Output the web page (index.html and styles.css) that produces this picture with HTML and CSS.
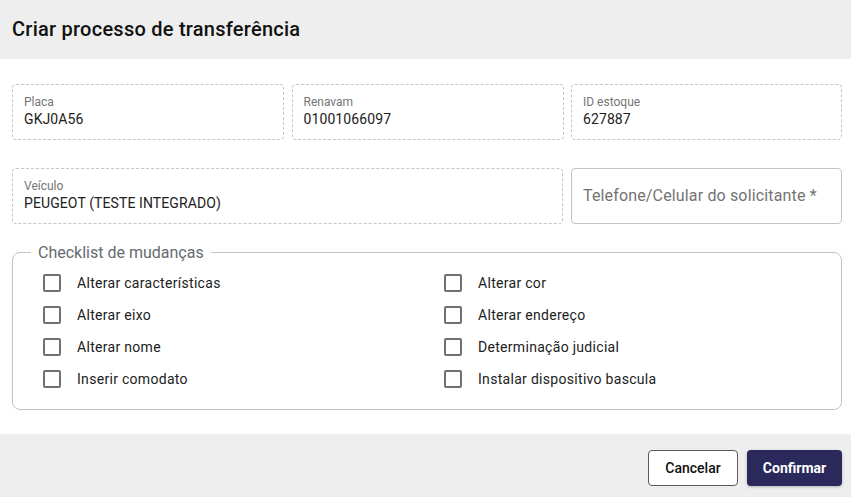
FILE: index.html
```html
<!DOCTYPE html>
<html lang="pt-BR">
<head>
<meta charset="utf-8">
<title>Criar processo de transferência</title>
<link rel="stylesheet" href="styles.css">
</head>
<body>
<div class="dialog">
  <header class="dialog-header">
    <h1 class="dialog-title">Criar processo de transferência</h1>
  </header>
  <main class="dialog-content">
    <div class="row row-3">
      <div class="field">
        <span class="field-label">Placa</span>
        <span class="field-value">GKJ0A56</span>
      </div>
      <div class="field">
        <span class="field-label">Renavam</span>
        <span class="field-value">01001066097</span>
      </div>
      <div class="field">
        <span class="field-label">ID estoque</span>
        <span class="field-value">627887</span>
      </div>
    </div>
    <div class="row row-2">
      <div class="field">
        <span class="field-label">Veículo</span>
        <span class="field-value">PEUGEOT (TESTE INTEGRADO)</span>
      </div>
      <div class="input-box">
        <span class="placeholder">Telefone/Celular do solicitante *</span>
      </div>
    </div>
    <fieldset class="checklist">
      <legend class="checklist-legend">Checklist de mudanças</legend>
      <div class="checklist-grid">
        <label class="check"><span class="box"></span>Alterar características</label>
        <label class="check"><span class="box"></span>Alterar cor</label>
        <label class="check"><span class="box"></span>Alterar eixo</label>
        <label class="check"><span class="box"></span>Alterar endereço</label>
        <label class="check"><span class="box"></span>Alterar nome</label>
        <label class="check"><span class="box"></span>Determinação judicial</label>
        <label class="check"><span class="box"></span>Inserir comodato</label>
        <label class="check"><span class="box"></span>Instalar dispositivo bascula</label>
      </div>
    </fieldset>
  </main>
  <footer class="dialog-footer">
    <button class="btn btn-outline">Cancelar</button>
    <button class="btn btn-primary">Confirmar</button>
  </footer>
</div>
</body>
</html>
```
FILE: styles.css
```css
* { box-sizing: border-box; }
html, body { margin: 0; padding: 0; background: #fff; }
body {
  font-family: Roboto, "Liberation Sans", Arial, sans-serif;
  color: #212121;
  width: 851px;
}
.dialog-header {
  height: 59px;
  background: #eeeeee;
  display: flex;
  align-items: center;
  padding: 0 12px;
}
.dialog-title {
  margin: 0;
  font-size: 20px;
  font-weight: 500;
  letter-spacing: 0.25px;
  color: #111;
  line-height: 24px;
  padding-bottom: 2px;
}
.dialog-content {
  padding: 25px 9px 24px 12px;
}
.row {
  display: grid;
  margin-bottom: 28px;
}
.row-3 { grid-template-columns: 272px 272px 1fr; gap: 7.5px; }
.row-2 { grid-template-columns: 551px 1fr; gap: 8px; margin-bottom: 19px; }
.field {
  height: 56px;
  border: 1px dashed #c6c6c6;
  border-radius: 4px;
  padding: 10px 11px;
  display: flex;
  flex-direction: column;
}
.field-label {
  font-size: 12px;
  line-height: 14px;
  color: #757575;
}
.field-value {
  font-size: 14px;
  line-height: 20px;
  color: #212121;
  letter-spacing: 0.1px;
}
.input-box {
  height: 56px;
  border: 1px solid #c4c4c4;
  border-radius: 4px;
  padding: 0 11px;
  display: flex;
  align-items: center;
}
.placeholder {
  font-size: 16px;
  letter-spacing: 0.15px;
  color: #737373;
  padding-bottom: 1px;
}
.checklist {
  margin: 0;
  border: 1px solid #c4c4c4;
  border-radius: 8px;
  padding: 5px 10px 14px 18px;
  min-width: 0;
}
.checklist-legend {
  margin-left: 0;
  padding: 0 7px;
  font-size: 16px;
  line-height: 19px;
  color: #666a70;
}
.checklist-grid {
  display: grid;
  grid-template-columns: 401px 1fr;
  grid-auto-rows: 32px;
}
.check {
  display: flex;
  align-items: center;
  padding-left: 12px;
  font-size: 14px;
  letter-spacing: 0.3px;
  color: #212121;
}
.box {
  width: 18px;
  height: 18px;
  border: 2px solid #707070;
  border-radius: 2px;
  margin-right: 16px;
  flex: none;
}
.dialog-footer {
  background: #eeeeee;
  height: 63px;
  display: flex;
  justify-content: flex-end;
  align-items: flex-start;
  gap: 9px;
  padding: 16px 9px 0 0;
}
.btn {
  height: 36px;
  border-radius: 4px;
  font-family: Roboto, "Liberation Sans", Arial, sans-serif;
  font-size: 14px;
  cursor: pointer;
}
.btn-outline {
  width: 90px;
  background: #fff;
  border: 1px solid #5a5a5a;
  color: #111;
  font-weight: 500;
}
.btn-primary {
  width: 95px;
  background: #2b295c;
  border: none;
  color: #fff;
  font-weight: 700;
  box-shadow: 0 1px 3px rgba(0,0,0,0.25);
}
```
